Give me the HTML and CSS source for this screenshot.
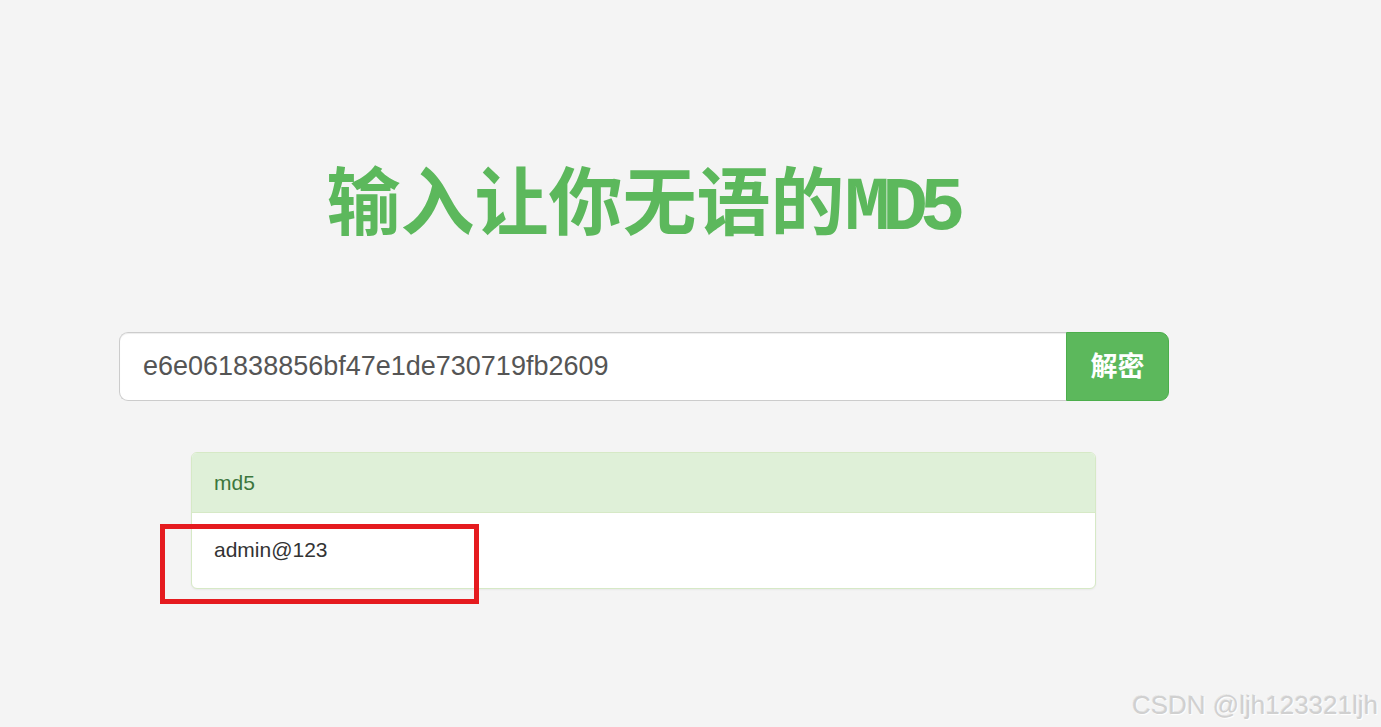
FILE: index.html
```html
<!DOCTYPE html>
<html lang="zh-CN">
<head>
    <meta charset="UTF-8">
    <meta name="viewport" content="width=device-width, initial-scale=1.0">
    <title>MD5 解密</title>
    <link rel="stylesheet" href="styles.css">
</head>
<body>
    <div class="container">
        <h1 class="title">输入让你无语的<span class="title-latin">MD5</span></h1>
        <form class="search" onsubmit="return false;">
            <input type="text" class="search-input" value="e6e061838856bf47e1de730719fb2609">
            <button type="submit" class="search-btn">解密</button>
        </form>
        <div class="panel">
            <div class="panel-heading">md5</div>
            <div class="panel-body">
                admin@123
                <span class="mark"></span>
            </div>
        </div>
    </div>
    <div class="watermark">CSDN @ljh123321ljh</div>
</body>
</html>
```

FILE: styles.css
```css
body {
    margin: 0;
    font-family: 'Liberation Sans', Arial, sans-serif;
    background-color: #f4f4f4;
    color: #333;
    height: 727px;
    position: relative;
    overflow: hidden;
}
.container {
    width: 1050px;
    margin-left: 119px;
    padding-top: 152px;
}
.title {
    margin: 0;
    height: 90px;
    text-align: center;
    font-family: 'Noto Sans CJK SC', 'Liberation Sans', sans-serif;
    font-size: 74px;
    font-weight: 700;
    line-height: 90px;
    color: #5cb85c;
    padding-right: 4px;
}
.title-latin {
    font-family: 'Liberation Mono', monospace;
    font-weight: 700;
    font-size: 76px;
    line-height: 1;
    letter-spacing: -8px;
}
.search {
    display: flex;
    margin-top: 90px;
    height: 69px;
}
.search-input {
    flex: 1;
    box-sizing: border-box;
    height: 69px;
    padding: 0 23px;
    border: 1px solid #ccc;
    border-right: none;
    border-radius: 9px 0 0 9px;
    background-color: #fff;
    font-family: 'Liberation Sans', Arial, sans-serif;
    font-size: 27px;
    color: #555;
    box-shadow: inset 0 1px 1px rgba(0, 0, 0, 0.075);
    outline: none;
}
.search-btn {
    width: 103px;
    height: 69px;
    padding: 0 0 4px;
    border: 1px solid #4cae4c;
    border-radius: 0 9px 9px 0;
    background-color: #5cb85c;
    color: #fff;
    font-family: 'Noto Sans CJK SC', sans-serif;
    font-size: 27px;
    font-weight: 700;
    cursor: pointer;
}
.panel {
    margin: 51px 73px 0 72px;
    background-color: #fff;
    border: 1px solid #d6e9c6;
    border-radius: 6px;
    box-shadow: 0 1px 2px rgba(0, 0, 0, 0.05);
}
.panel-heading {
    height: 60px;
    box-sizing: border-box;
    padding: 15px 22px;
    background-color: #dff0d8;
    border-bottom: 1px solid #d6e9c6;
    border-radius: 5px 5px 0 0;
    color: #3c763d;
    font-size: 21px;
    line-height: 30px;
}
.panel-body {
    position: relative;
    padding: 22px 22px 23px;
    font-size: 21px;
    line-height: 30px;
    color: #333;
}
/* красная рамка-пометка поверх панели */
.mark {
    position: absolute;
    left: -32px;
    top: 11px;
    width: 309px;
    height: 70px;
    border: 5px solid #e51b1f;
}
.watermark {
    position: absolute;
    right: 3px;
    bottom: 6px;
    font-size: 26px;
    color: #d0d0d0;
    text-shadow: 1px 1px 1px #fff, -1px -1px 0 rgba(0, 0, 0, 0.06);
}
```
